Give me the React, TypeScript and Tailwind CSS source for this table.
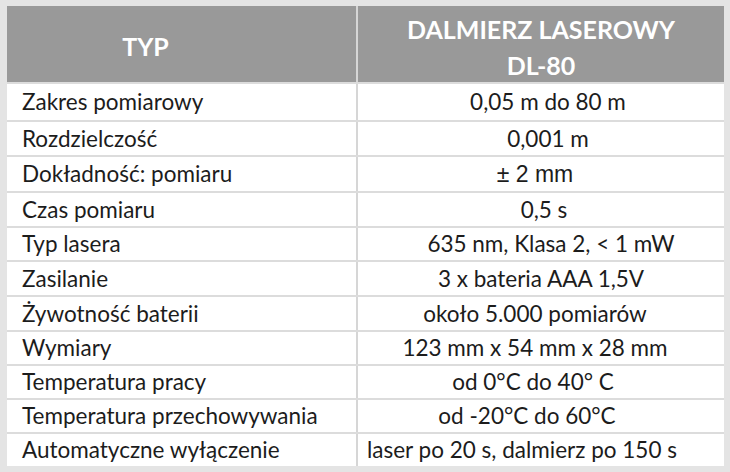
const rows: { label: string; value: string; h: string; shift: string }[] = [
  { label: "Zakres pomiarowy", value: "0,05 m do 80 m", h: "h-[36px]", shift: "pl-[14px]" },
  { label: "Rozdzielczość", value: "0,001 m", h: "h-[33px]", shift: "pl-[14px]" },
  { label: "Dokładność: pomiaru", value: "± 2 mm", h: "h-[34px]", shift: "pr-[12px] font-['Liberation_Sans',sans-serif] text-[23px]" },
  { label: "Czas pomiaru", value: "0,5 s", h: "h-[33px]", shift: "pl-[6px]" },
  { label: "Typ lasera", value: "635 nm, Klasa 2, < 1 mW", h: "h-[32px]", shift: "pl-[20px]" },
  { label: "Zasilanie", value: "3 x bateria AAA 1,5V", h: "h-[33px]", shift: "" },
  { label: "Żywotność baterii", value: "około 5.000 pomiarów", h: "h-[33px]", shift: "pr-[12px]" },
  { label: "Wymiary", value: "123 mm x 54 mm x 28 mm", h: "h-[32px]", shift: "pr-[12px]" },
  { label: "Temperatura pracy", value: "od 0°C do 40° C", h: "h-[32px]", shift: "pr-[16px]" },
  { label: "Temperatura przechowywania", value: "od -20°C do 60°C", h: "h-[32px]", shift: "pr-[28px]" },
  { label: "Automatyczne wyłączenie", value: "laser po 20 s, dalmierz po 150 s", h: "h-[32px]", shift: "pr-[38px]" },
];

const App = () => {
  return (
    <div className="h-[472px] w-[730px] bg-[#e4e4e4] pt-[6px] pr-[6px] pb-[6px] pl-[7px] font-['Lato',sans-serif] text-[#1c1c1c]">
      <div className="flex h-full flex-col bg-white">
        <div className="flex h-[78px] shrink-0 border-b-2 border-[#dcdcdc] bg-[#999999] font-bold text-white">
          <div className="flex w-[349px] items-center justify-center pt-[6px] pr-[72px] text-[25px]">
            TYP
          </div>
          <div className="w-[2px] bg-[#d6d6d6]" />
          <div className="flex flex-1 flex-col items-center justify-center pt-[6px] text-[25px] leading-[36px]">
            <span>DALMIERZ LASEROWY</span>
            <span>DL-80</span>
          </div>
        </div>

        {rows.map((row, i) => (
          <div
            key={row.label}
            className={`flex shrink-0 text-[22.5px] ${i < rows.length - 1 ? "border-b-2 border-[#dcdcdc]" : ""}`}
          >
            <div className={`flex w-[349px] items-center pl-[15px] ${row.h}`}>
              {row.label}
            </div>
            <div className="w-[2px] bg-[#d6d6d6]" />
            <div className={`flex flex-1 items-center justify-center whitespace-nowrap ${row.h} ${row.shift}`}>
              {row.value}
            </div>
          </div>
        ))}
      </div>
    </div>
  );
};

export default App;
